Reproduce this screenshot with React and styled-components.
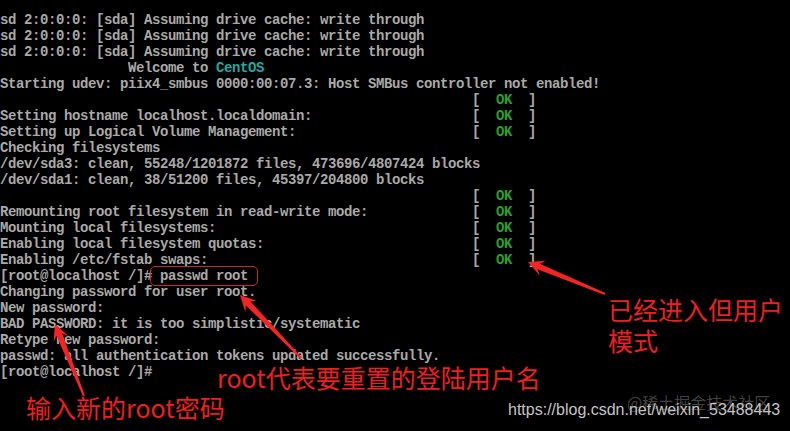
import React from 'react';
import styled, { createGlobalStyle } from 'styled-components';

const GlobalStyle = createGlobalStyle`
  html, body {
    margin: 0;
    padding: 0;
    background: #000;
  }
`;

const OK_COL = 59;

const rows = [
  { text: 'sd 2:0:0:0: [sda] Assuming drive cache: write through' },
  { text: 'sd 2:0:0:0: [sda] Assuming drive cache: write through' },
  { text: 'sd 2:0:0:0: [sda] Assuming drive cache: write through' },
  { kind: 'welcome' },
  { text: 'Starting udev: piix4_smbus 0000:00:07.3: Host SMBus controller not enabled!' },
  { text: '', ok: true },
  { text: 'Setting hostname localhost.localdomain:', ok: true },
  { text: 'Setting up Logical Volume Management:', ok: true },
  { text: 'Checking filesystems' },
  { text: '/dev/sda3: clean, 55248/1201872 files, 473696/4807424 blocks' },
  { text: '/dev/sda1: clean, 38/51200 files, 45397/204800 blocks' },
  { text: '', ok: true },
  { text: 'Remounting root filesystem in read-write mode:', ok: true },
  { text: 'Mounting local filesystems:', ok: true },
  { text: 'Enabling local filesystem quotas:', ok: true },
  { text: 'Enabling /etc/fstab swaps:', ok: true },
  { kind: 'prompt' },
  { text: 'Changing password for user root.' },
  { text: 'New password:' },
  { text: 'BAD PASSWORD: it is too simplistic/systematic' },
  { text: 'Retype new password:' },
  { text: 'passwd: all authentication tokens updated successfully.' },
  { text: '[root@localhost /]#' },
];

// tapered annotation arrow, tail -> tip
function arrowPoints(x1, y1, x2, y2, head = 16, hw = 8, neck = 3, tail = 1) {
  const dx = x2 - x1;
  const dy = y2 - y1;
  const len = Math.hypot(dx, dy);
  const ux = dx / len;
  const uy = dy / len;
  const px = -uy;
  const py = ux;
  const nx = x2 - ux * head * 0.72;
  const ny = y2 - uy * head * 0.72;
  const bx = x2 - ux * head;
  const by = y2 - uy * head;
  const pts = [
    [x1 + px * tail, y1 + py * tail],
    [nx + px * neck, ny + py * neck],
    [bx + px * hw, by + py * hw],
    [x2, y2],
    [bx - px * hw, by - py * hw],
    [nx - px * neck, ny - py * neck],
    [x1 - px * tail, y1 - py * tail],
  ];
  return pts.map((p) => p.map((v) => v.toFixed(1)).join(',')).join(' ');
}

const arrows = [
  { from: [605, 294], to: [528, 262] },
  { from: [301, 358], to: [240, 295] },
  { from: [84, 396], to: [55, 324] },
];

export default function App() {
  return (
    <>
      <GlobalStyle />
      <Screen>
        <Terminal>
          {rows.map((row, i) => {
            if (row.kind === 'welcome') {
              return (
                <Line key={i}>
                  {'                Welcome to '}
                  <Cyan>CentOS</Cyan>
                </Line>
              );
            }
            if (row.kind === 'prompt') {
              return (
                <Line key={i}>
                  {'[root@localhost /]#'}
                  <Boxed>{' passwd root '}</Boxed>
                </Line>
              );
            }
            return (
              <Line key={i}>
                {row.ok ? row.text.padEnd(OK_COL) + '[  ' : row.text}
                {row.ok && <Ok>OK</Ok>}
                {row.ok && '  ]'}
              </Line>
            );
          })}
        </Terminal>

        <ArrowLayer width="790" height="431" viewBox="0 0 790 431">
          {arrows.map((a, i) => (
            <polygon
              key={i}
              points={arrowPoints(a.from[0], a.from[1], a.to[0], a.to[1])}
              fill="#f42424"
            />
          ))}
        </ArrowLayer>

        <Note $x={608} $y={294}>
          已经进入但用户
          <br />
          模式
        </Note>
        <Note $x={217} $y={362}>root代表要重置的登陆用户名</Note>
        <Note $x={26} $y={392}>输入新的root密码</Note>

        <Watermark $x={627} $y={394} $dim>@稀土掘金技术社区</Watermark>
        <Watermark $x={508} $y={402}>https://blog.csdn.net/weixin_53488443</Watermark>
      </Screen>
    </>
  );
}

const Screen = styled.div`
  position: relative;
  width: 790px;
  height: 431px;
  background: #000;
  overflow: hidden;
`;

const Terminal = styled.div`
  display: flex;
  flex-direction: column;
  padding-top: 12px;
  font-family: 'Liberation Mono', 'DejaVu Sans Mono', monospace;
  font-size: 14px;
  font-weight: 700;
  letter-spacing: -0.4px;
  color: #a9a9a9;
`;

const Line = styled.div`
  height: 16px;
  line-height: 16px;
  white-space: pre;
`;

const Cyan = styled.span`
  color: #22a89e;
`;

const Ok = styled.span`
  color: #27a12b;
`;

const Boxed = styled.span`
  display: inline-block;
  height: 16px;
  outline: 1.5px solid #c42a2a;
  outline-offset: 1px;
  border-radius: 3px;
`;

const ArrowLayer = styled.svg`
  position: absolute;
  left: 0;
  top: 0;
  pointer-events: none;
`;

const Note = styled.div`
  position: absolute;
  left: ${(p) => p.$x}px;
  top: ${(p) => p.$y}px;
  font-family: 'Noto Sans CJK SC', 'Noto Sans', sans-serif;
  font-size: 25px;
  line-height: 31px;
  color: #f01f1f;
  white-space: nowrap;
`;

const Watermark = styled.div`
  position: absolute;
  left: ${(p) => p.$x}px;
  top: ${(p) => p.$y}px;
  font-family: ${(p) => (p.$dim ? "'Noto Sans CJK SC', sans-serif" : "'Liberation Sans', Arial, sans-serif")};
  font-size: 16px;
  line-height: 16px;
  color: ${(p) => (p.$dim ? 'rgba(150, 150, 150, 0.45)' : '#c4c4c4')};
  white-space: nowrap;
`;
